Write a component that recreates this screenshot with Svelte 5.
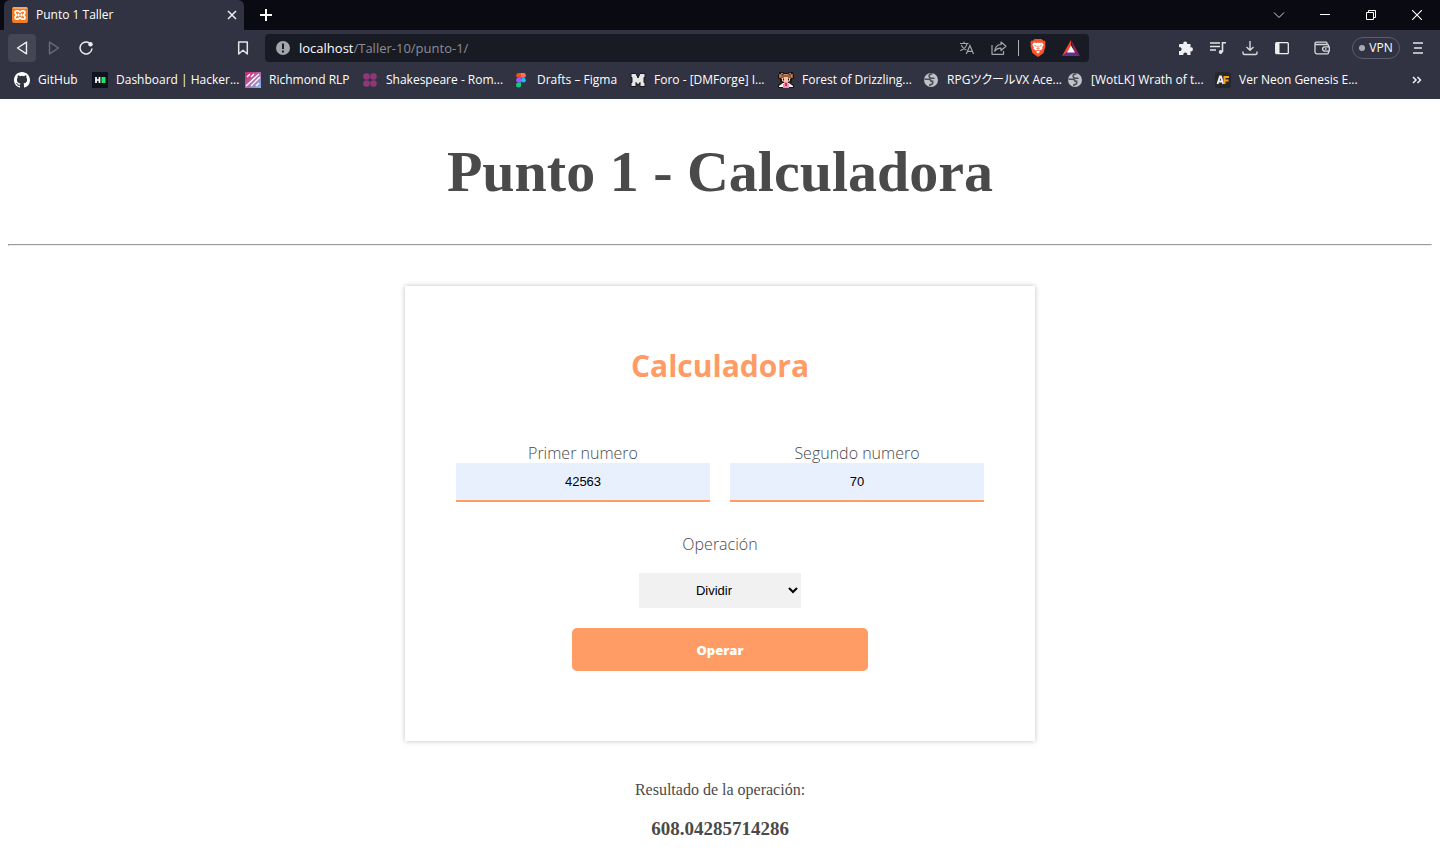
<script>
  const bookmarks = [
    { icon: 'github', label: 'GitHub', width: 78 },
    { icon: 'hacker', label: 'Dashboard | Hacker...', width: 153 },
    { icon: 'richmond', label: 'Richmond RLP', width: 117 },
    { icon: 'dots', label: 'Shakespeare - Rom...', width: 151 },
    { icon: 'figma', label: 'Drafts – Figma', width: 117 },
    { icon: 'forge', label: 'Foro - [DMForge] I...', width: 148 },
    { icon: 'girl', label: 'Forest of Drizzling...', width: 145 },
    { icon: 'globe', label: 'RPGツクールVX Ace...', width: 144 },
    { icon: 'globe', label: '[WotLK] Wrath of t...', width: 148 },
    { icon: 'af', label: 'Ver Neon Genesis E...', width: 150 }
  ];

  const operations = {
    Sumar: (a, b) => a + b,
    Restar: (a, b) => a - b,
    Multiplicar: (a, b) => a * b,
    Dividir: (a, b) => a / b
  };

  let first = $state('42563');
  let second = $state('70');
  let operation = $state('Dividir');
  let result = $state('608.04285714286');

  function operate(event) {
    event.preventDefault();
    const value = operations[operation](Number(first), Number(second));
    result = String(Number(value.toPrecision(14)));
  }
</script>

<header class="browser">
  <div class="tabs">
    <div class="tab">
      <svg width="16" height="16" viewBox="0 0 16 16" aria-hidden="true">
        <rect width="16" height="16" rx="2" fill="#f37b22" />
        <rect x="1" width="14" height="2" fill="#f9a55f" />
        <path d="M4.800 3.800h1c1.200 0 1.200 1.400 2.200 1.400s1-1.400 2.200-1.400h1c1.100 0 1.800.8 1.800 1.800 0 1.200-1.700 2.400-1.700 2.400s1.700 1.200 1.700 2.400c0 1-.7 1.800-1.800 1.800h-1c-1.200 0-1.200-1.400-2.200-1.400s-1 1.400-2.200 1.400h-1C3.700 12.200 3 11.400 3 10.400 3 9.200 4.700 8 4.700 8S3 6.800 3 5.600c0-1 .7-1.800 1.800-1.800z" fill="none" stroke="#fff" stroke-width="1.700" />
        <path d="M6 8h4M6.500 6.500v3M9.500 6.500v3" stroke="#fff" stroke-width="1.200" />
      </svg>
      <span class="tab-title">Punto 1 Taller</span>
      <button class="plain" aria-label="Cerrar pestaña">
        <svg width="10" height="10" viewBox="0 0 10 10"><path d="M1 1l8 8M9 1L1 9" stroke="#f0f0f2" stroke-width="1.500" /></svg>
      </button>
    </div>
    <button class="plain new-tab" aria-label="Nueva pestaña">
      <svg width="12" height="12" viewBox="0 0 12 12"><path d="M6 0v12M0 6h12" stroke="#fff" stroke-width="2" /></svg>
    </button>
    <div class="window-controls">
      <button class="plain" aria-label="Buscar pestañas"><svg width="12" height="12" viewBox="0 0 12 12"><path d="M1 3.500l5 5 5-5" fill="none" stroke="#d5d5d8" /></svg></button>
      <button class="plain" aria-label="Minimizar"><svg width="10" height="10" viewBox="0 0 10 10"><path d="M0 4.500h10" stroke="#fff" /></svg></button>
      <button class="plain" aria-label="Restaurar"><svg width="10" height="10" viewBox="0 0 10 10" fill="none" stroke="#fff"><path d="M.5 2.500h7v7h-7zM2.500 2.500v-2h7v7h-2" /></svg></button>
      <button class="plain" aria-label="Cerrar"><svg width="10" height="10" viewBox="0 0 10 10"><path d="M0 0l10 10M10 0L0 10" stroke="#fff" stroke-width="1.100" /></svg></button>
    </div>
  </div>

  <div class="toolbar">
    <div class="nav">
      <button class="tool active" aria-label="Atrás"><svg width="16" height="16" viewBox="0 0 16 16"><path d="M12.500 2.200v11.600L3.500 8z" fill="none" stroke="#f0f0f2" stroke-width="1.400" stroke-linejoin="round" /></svg></button>
      <button class="tool" aria-label="Adelante"><svg width="16" height="16" viewBox="0 0 16 16"><path d="M3.500 2.200v11.600L12.500 8z" fill="none" stroke="#6b6c79" stroke-width="1.400" stroke-linejoin="round" /></svg></button>
      <button class="tool" aria-label="Recargar"><svg width="16" height="16" viewBox="0 0 16 16"><path d="M11.300 2.900A6 6 0 1 0 14 8.500" fill="none" stroke="#eee" stroke-width="1.500" /><circle cx="12.500" cy="4.300" r="2.200" fill="#eee" /></svg></button>
      <button class="tool marker" aria-label="Guardar marcador"><svg width="16" height="16" viewBox="0 0 16 16"><path d="M3.700 2h8.600v12L8 10.300 3.700 14z" fill="none" stroke="#e4e4e6" stroke-width="1.500" stroke-linejoin="round" /></svg></button>
    </div>
    <div class="address">
      <svg width="14" height="14" viewBox="0 0 14 14" aria-hidden="true"><circle cx="7" cy="7" r="7" fill="#a3a5ad" /><path d="M7 2.500v5.500M7 9.500v2" stroke="#1a1b24" stroke-width="2" /></svg>
      <span class="url"><b>localhost</b>/Taller-10/punto-1/</span>
      <div class="address-icons">
        <svg width="16" height="16" viewBox="0 0 16 16" fill="none" stroke="#a5a6ad" stroke-width="1.200" aria-hidden="true"><path d="M1 3.500h8.500M5 1.800v1.700M2.300 5.200c1 2.200 3 3.800 5 4.800M8 3.500C7.500 6.500 5 9.200 1.300 10.600M7.300 14L10.900 5.600 14.500 14M8.500 11.300h4.800" /></svg>
        <svg width="16" height="16" viewBox="0 0 16 16" fill="none" stroke="#a5a6ad" stroke-width="1.200" stroke-linejoin="round" aria-hidden="true"><path d="M1 5v9.300h11.500V11M10 2l5 4.300-5 4.200V8.200C7 8 5 9.200 3.700 11.300 4 7.600 6 4.700 10 4.500z" /></svg>
        <span class="divider"></span>
        <svg width="16" height="18" viewBox="0 0 16 18" aria-hidden="true"><path d="M4.500 0h7l1.700 1.700 1.300-.2 1.200 2-.6 1.500.5 1.600-2 7.400L8 18l-5.600-4L.4 6.600.9 5 .3 3.500l1.200-2 1.300.2z" fill="#fb542b" /><path d="M4 3.500l2.300.5L8 3.600 9.700 4l2.300-.5 1.700 2.300-1.500 2.500.2 1.600-2.400 1.700L8 10.800l-2 .8-2.400-1.700.2-1.600-1.500-2.500zM8 11.600l2 1.200-2 1.800-2-1.800z" fill="#fff" /><path d="M4.500 6.400l2 .8M11.500 6.400l-2 .8M8 6.500v2.400M6.500 9.400L8 10l1.500-.6" fill="none" stroke="#fb542b" stroke-width=".9" /></svg>
        <svg width="18" height="16" viewBox="0 0 18 16" aria-hidden="true"><path d="M9 0L0 16l9-5z" fill="#ff4724" /><path d="M9 0l9 16-6-5z" fill="#9e1f63" /><path d="M0 16h18l-5-4H5z" fill="#662d91" /><path d="M9 5.500l4 7H5z" fill="#fff" /></svg>
      </div>
    </div>
    <div class="extensions">
      <button class="tool" aria-label="Extensiones"><svg width="16" height="16" viewBox="0 0 16 16"><path d="M2 4h3.300a2 2 0 1 1 3.800 0h3.400v3.400a2 2 0 1 1 0 3.900V15H9.200a2 2 0 1 0-3.800 0H1v-4a2 2 0 1 0 0-3.800V5a1 1 0 0 1 1-1z" fill="#f0f0f2" /></svg></button>
      <button class="tool" aria-label="Multimedia"><svg width="16" height="16" viewBox="0 0 16 16" fill="none" stroke="#e4e4e6" stroke-width="1.600"><path d="M0 3h10M0 6.500h10M0 10h6M12.500 12V2.800H16" /><circle cx="10.700" cy="12" r="1.900" fill="#e4e4e6" stroke="none" /></svg></button>
      <button class="tool" aria-label="Descargas"><svg width="16" height="16" viewBox="0 0 16 16" fill="none" stroke="#d8d8dc" stroke-width="1.400"><path d="M8 1v9M4.500 7L8 10.300 11.500 7M1 11.500V13q0 1.500 1.500 1.500h11Q15 14.500 15 13v-1.500" /></svg></button>
      <button class="tool" aria-label="Panel lateral"><svg width="16" height="16" viewBox="0 0 16 16"><rect x="1.700" y="2.700" width="12.600" height="11" rx="1" fill="none" stroke="#eee" stroke-width="1.300" /><path d="M2 3h3.500v10.500H2z" fill="#eee" /></svg></button>
      <button class="tool wallet" aria-label="Cartera"><svg width="16" height="16" viewBox="0 0 16 16" fill="none" stroke="#d8d8dc" stroke-width="1.300"><path d="M14.500 6.500V5.500q0-1-1-1H1.500M13 4.500V3.200q0-1-1-1H2.500Q1 2.200 1 3.700V12q0 1.800 1.800 1.800h10.700q1 0 1-1v-1.500M15.300 6.800h-4.500a2.200 2.200 0 0 0 0 4.400h4.500z" /><path d="M11 9h1.500" /></svg></button>
      <button class="vpn"><span class="vpn-dot"></span>VPN</button>
      <button class="plain menu" aria-label="Menú"><svg width="10" height="12" viewBox="0 0 10 12"><path d="M0 1h10M1 6h8M0 11h10" stroke="#e4e4e6" stroke-width="1.500" /></svg></button>
    </div>
  </div>

  <nav class="bookmarks" aria-label="Marcadores">
    {#each bookmarks as item}
      <a href="#app" style:width="{item.width}px">
        {#if item.icon === 'github'}
          <svg width="16" height="16" viewBox="0 0 16 16"><path fill="#fff" d="M8 0C3.580 0 0 3.580 0 8c0 3.540 2.290 6.530 5.470 7.590.4.070.55-.17.55-.38 0-.19-.01-.82-.01-1.490-2.010.37-2.530-.49-2.690-.94-.09-.23-.48-.94-.82-1.130-.28-.15-.68-.52-.01-.53.63-.01 1.080.58 1.230.82.72 1.210 1.870.87 2.330.66.070-.52.28-.87.51-1.070-1.780-.2-3.640-.89-3.640-3.950 0-.87.31-1.590.82-2.150-.08-.2-.36-1.020.08-2.120 0 0 .67-.21 2.200.82a7.600 7.600 0 0 1 4 0c1.530-1.040 2.200-.82 2.200-.82.44 1.100.16 1.920.08 2.120.51.56.82 1.270.82 2.150 0 3.070-1.870 3.750-3.650 3.950.29.25.54.73.54 1.480 0 1.070-.01 1.930-.01 2.200 0 .21.15.46.55.38A8 8 0 0 0 16 8c0-4.420-3.580-8-8-8z" /></svg>
        {:else if item.icon === 'hacker'}
          <svg width="16" height="16" viewBox="0 0 16 16"><path fill="#0e141e" d="M0 0h16v16H0z" /><path d="M4 5v6M7.500 5v6M4 8h3.500" stroke="#fff" stroke-width="1.700" /><path fill="#1fe663" d="M9.500 5h4v6h-4z" /></svg>
        {:else if item.icon === 'richmond'}
          <svg width="16" height="16" viewBox="0 0 16 16"><defs><linearGradient id="rich" x2="1" y2="1"><stop stop-color="#d71f68" /><stop offset=".5" stop-color="#b265ad" /><stop offset="1" stop-color="#79bdf2" /></linearGradient></defs><path fill="url(#rich)" d="M0 0h16v16H0z" /><path d="M1 14L14 2M6 14L15 5M11 14l3-3M2 5l3-3M6 5l3-3" stroke="#fff" stroke-width="1.400" /></svg>
        {:else if item.icon === 'dots'}
          <svg width="16" height="16" viewBox="0 0 16 16" fill="#8f3778"><circle cx="4.500" cy="4.500" r="3.300" /><circle cx="11.500" cy="4.500" r="3.300" /><circle cx="4.500" cy="11.500" r="3.300" /><circle cx="11.500" cy="11.500" r="3.300" /></svg>
        {:else if item.icon === 'figma'}
          <svg width="16" height="16" viewBox="0 0 16 16"><path fill="#f24e1e" d="M8 1H5.500a2.400 2.400 0 0 0 0 4.800H8z" /><path fill="#ff7262" d="M8 1h2.500a2.400 2.400 0 0 1 0 4.800H8z" /><path fill="#a259ff" d="M8 5.800H5.500a2.400 2.400 0 0 0 0 4.800H8z" /><circle cx="10.400" cy="8.200" r="2.400" fill="#1abcfe" /><path fill="#0acf83" d="M8 10.600H5.500A2.500 2.500 0 1 0 8 13.100z" /></svg>
        {:else if item.icon === 'forge'}
          <svg width="16" height="16" viewBox="0 0 16 16"><path d="M1 1.500h5l2 4.500 2-4.500h5v4h-1v5h1v4h-5v-4l-2 2.500-2-2.500v4H1v-4h1v-5H1z" fill="#e6e6e6" stroke="#18181c" stroke-linejoin="round" /></svg>
        {:else if item.icon === 'girl'}
          <svg width="16" height="16" viewBox="0 0 16 16"><path fill="#21150f" d="M1 0h4l1 1h4l1-1h4v2h1v5h-2v3h-2l4 3v3H0v-3l4-3H2V7H0V2h1z" /><path fill="#9a6044" d="M1 2h3v4H1zM12 2h3v4h-3zM5 2h6l2 3v2H3V5z" /><path fill="#c98a66" d="M6 2h4v1H6zM2 3h1v2H2zM13 3h1v2h-1z" /><path fill="#f3c6a2" d="M4 6h2V5h4v1h2v3l-2 1H6L4 9z" /><path d="M5.500 6.500v2M10.500 6.500v2" stroke="#2c171c" /><path fill="#fff" d="M1 14l4-3h6l4 3v1H1z" /><path fill="#f08ab0" d="M6 10h4v2h1v4H5v-4h1z" /><path fill="#d9264f" d="M7 11h2v3H7z" /><path fill="#ff5e70" d="M3 1h2v1H3zM11 1h2v1h-2z" /></svg>
        {:else if item.icon === 'globe'}
          <svg width="16" height="16" viewBox="0 0 16 16"><circle cx="8" cy="8" r="7" fill="#bfc1c5" /><path d="M9.500 1.800Q6 2 6.200 4.200T8.500 6.300h3M1.500 7.300h3.600Q8 7.300 8 9.300h1.700v1.500Q9.500 12.500 7 12.700V14" fill="none" stroke="#4c4e59" stroke-width="1.600" /></svg>
        {:else}
          <svg width="16" height="16" viewBox="0 0 16 16"><rect width="16" height="16" rx="3" fill="#26272b" /><path d="M2.500 12L5 4.500h1L8.300 12M3.500 9.500h4" stroke="#eee" stroke-width="1.900" fill="none" /><path d="M9.500 12V5H14M9.500 8.500h4" stroke="#f9a01b" stroke-width="2" fill="none" /></svg>
        {/if}
        <span>{item.label}</span>
      </a>
    {/each}
    <button class="plain more" aria-label="Más marcadores"><svg width="10" height="8" viewBox="0 0 10 8"><path d="M1 1l3 3-3 3M5.500 1l3 3-3 3" fill="none" stroke="#f0f0f2" stroke-width="1.500" /></svg></button>
  </nav>
</header>

<main>
  <h1>Punto 1 - Calculadora</h1>
  <hr />
  <form onsubmit={operate}>
    <h2>Calculadora</h2>
    <div class="fields">
      <div class="field">
        <label for="first">Primer numero</label>
        <input id="first" type="text" inputmode="decimal" bind:value={first} />
      </div>
      <div class="field">
        <label for="second">Segundo numero</label>
        <input id="second" type="text" inputmode="decimal" bind:value={second} />
      </div>
    </div>
    <label for="operation">Operación</label>
    <select id="operation" bind:value={operation}>
      {#each Object.keys(operations) as name}
        <option value={name}>{name}</option>
      {/each}
    </select>
    <button class="submit" type="submit">Operar</button>
  </form>
  <p>Resultado de la operación:</p>
  <h3>{result}</h3>
</main>

<style>
  :global(body) {
    background: #fff;
  }

  .browser {
    background: #313342;
    color: #fff;
    font: 12px/16px "Open Sans", "Noto Sans CJK JP", sans-serif;
    padding-bottom: 1px;
  }

  .browser button {
    font: inherit;
    color: inherit;
    border: 0;
    padding: 0;
    background: none;
  }

  .browser svg {
    flex: none;
    display: block;
  }

  .plain,
  .tool {
    display: flex;
    align-items: center;
    justify-content: center;
  }

  .tabs {
    display: flex;
    height: 30px;
    padding-left: 4px;
    background: #0a0a13;
  }

  .tab {
    display: flex;
    align-items: center;
    gap: 8px;
    width: 240px;
    box-sizing: border-box;
    padding: 0 7px 0 8px;
    border-radius: 6px 6px 0 0;
    background: #313342;
  }

  .tab-title {
    flex: 1;
  }

  .new-tab {
    width: 44px;
  }

  .window-controls {
    display: flex;
    margin-left: auto;
  }

  .window-controls button {
    width: 46px;
  }

  .toolbar {
    display: flex;
    align-items: center;
    gap: 8px;
    padding: 4px 8px;
  }

  .nav {
    display: flex;
    gap: 4px;
    width: 249px;
  }

  .tool {
    width: 28px;
    height: 28px;
    border-radius: 4px;
  }

  .browser .active {
    background: #444654;
  }

  .marker {
    margin-left: auto;
  }

  .address {
    display: flex;
    flex: 1;
    align-items: center;
    gap: 9px;
    height: 28px;
    box-sizing: border-box;
    padding: 0 9px 0 11px;
    border-radius: 4px;
    background: #191b24;
  }

  .url {
    flex: 1;
    color: #8b8d96;
    font-size: 13px;
  }

  .url b {
    color: #fff;
    font-weight: 400;
  }

  .address-icons {
    display: flex;
    align-items: center;
    gap: 16px;
  }

  .divider {
    width: 1px;
    height: 16px;
    margin: 0 -5px;
    background: #b0b1b7;
  }

  .extensions {
    display: flex;
    align-items: center;
    gap: 4px;
    margin-left: 75px;
  }

  .wallet {
    margin: 0 12px 0 8px;
  }

  .browser .vpn {
    display: flex;
    align-items: center;
    justify-content: center;
    gap: 4px;
    width: 48px;
    height: 22px;
    border: 1px solid #5b5d70;
    border-radius: 11px;
  }

  .vpn-dot {
    width: 6px;
    height: 6px;
    border-radius: 50%;
    background: #a9abb8;
  }

  .menu {
    width: 28px;
    height: 28px;
  }

  .bookmarks {
    display: flex;
    align-items: center;
    height: 32px;
    padding: 0 18px 4px 14px;
    box-sizing: border-box;
    font-feature-settings: "palt";
  }

  .bookmarks a {
    display: flex;
    align-items: center;
    gap: 8px;
    color: inherit;
    text-decoration: none;
    white-space: nowrap;
  }

  .more {
    margin-left: auto;
  }

  main {
    padding: 40px 8px 20px;
    color: #4a4a4a;
    font: 16px/18px "Liberation Serif", serif;
    text-align: center;
  }

  h1 {
    margin: 0 0 39px;
    font-size: 58px;
    line-height: 66px;
  }

  hr {
    margin: 0 0 40px;
  }

  form {
    display: flex;
    flex-direction: column;
    align-items: center;
    max-width: 630px;
    box-sizing: border-box;
    margin: 0 auto 40px;
    padding: 58px 51px 70px;
    box-shadow: 0 0 5px rgba(0, 0, 0, 0.25);
    font: 300 16px/20px "Open Sans", sans-serif;
  }

  h2 {
    margin: 0 0 55px;
    color: #ff9c66;
    font-size: 30px;
    font-weight: 700;
    line-height: 44px;
  }

  .fields {
    display: grid;
    grid-template-columns: 1fr 1fr;
    gap: 20px;
    width: 100%;
    margin-bottom: 32px;
  }

  .field {
    display: flex;
    flex-direction: column;
  }

  input,
  select {
    border: 0;
    border-radius: 0;
    color: #000;
    font: 13px "Liberation Sans", sans-serif;
    text-align: center;
  }

  input {
    height: 39px;
    box-sizing: border-box;
    min-width: 0;
    border-bottom: 2px solid #ff9c66;
    background: #e8f0fe;
  }

  select {
    width: 162px;
    height: 35px;
    margin: 19px 0 20px;
    background: #f1f1f1;
  }

  .submit {
    width: 56%;
    height: 43px;
    border: 0;
    border-radius: 5px;
    background: #ff9c66;
    color: #fff;
    font: 800 13px "Open Sans", sans-serif;
  }

  p {
    margin: 0 0 19px;
  }

  h3 {
    margin: 0;
    font-size: 19px;
    line-height: 22px;
  }
</style>
